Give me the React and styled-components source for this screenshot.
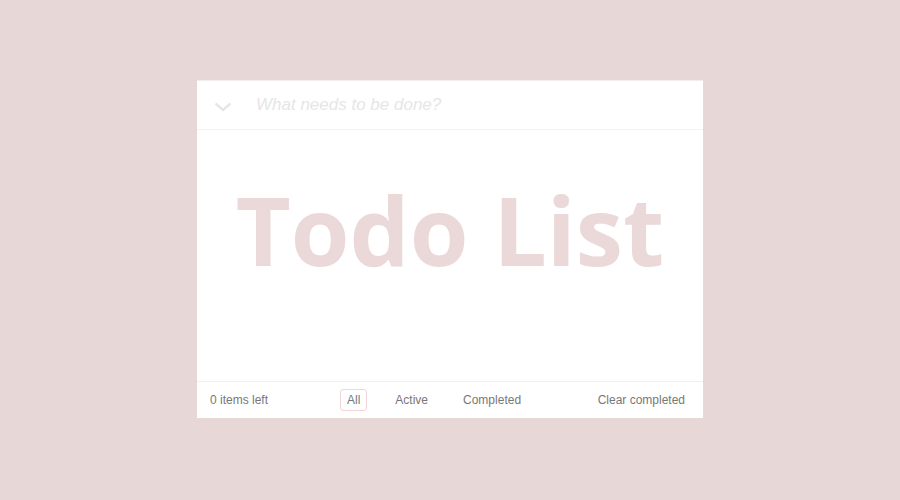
import React from 'react';
import styled, { createGlobalStyle } from 'styled-components';

const GlobalStyle = createGlobalStyle`
  html, body {
    margin: 0;
    padding: 0;
    background: #e8d7d7;
  }
  body {
    font-family: "Liberation Sans", Arial, sans-serif;
  }
`;

const Page = styled.div`
  width: 900px;
  height: 500px;
  display: flex;
  align-items: center;
  justify-content: center;
`;

const Card = styled.section`
  width: 506px;
  height: 338px;
  margin-bottom: 2px;
  background: #fff;
  display: flex;
  flex-direction: column;
  box-sizing: border-box;
  border-top: 1px solid #f3ecec;
`;

const Header = styled.header`
  height: 49px;
  display: flex;
  align-items: center;
  border-bottom: 1px solid #f3f3f3;
  box-sizing: border-box;
`;

const Toggle = styled.span`
  width: 59px;
  display: flex;
  justify-content: center;
  padding-top: 3px;
  svg {
    margin-left: -8px;
  }
`;

const NewTodo = styled.input`
  flex: 1;
  border: none;
  outline: none;
  background: transparent;
  font-family: "Liberation Sans", Arial, sans-serif;
  font-size: 17px;
  font-style: italic;
  padding: 0;
  &::placeholder {
    color: #e6e6e6;
  }
`;

const Body = styled.main`
  flex: 1;
  display: flex;
  justify-content: center;
  padding-top: 52px;
  box-sizing: border-box;
`;

const Watermark = styled.h1`
  margin: 0;
  font-family: "Open Sans", sans-serif;
  font-weight: 700;
  font-size: 95px;
  line-height: 1;
  color: #ebd8d8;
  letter-spacing: 0;
`;

const Footer = styled.footer`
  height: 37px;
  border-top: 1px solid #f0f0f0;
  display: flex;
  align-items: center;
  padding: 0 18px 0 13px;
  font-size: 12px;
  color: #777;
  box-sizing: border-box;
`;

const Count = styled.span`
  width: 130px;
`;

const Filters = styled.ul`
  list-style: none;
  margin: 0;
  padding: 0;
  display: flex;
  gap: 21px;
  flex: 1;
`;

const Filter = styled.li`
  padding: 3px 6px;
  border-radius: 3px;
  border: 1px solid ${({ $selected }) => ($selected ? '#efd5d5' : 'transparent')};
  color: #777;
`;

const Clear = styled.span`
  color: #777;
`;

const filters = ['All', 'Active', 'Completed'];

export default function App() {
  return (
    <>
      <GlobalStyle />
      <Page>
        <Card>
          <Header>
            <Toggle>
              <svg width="18" height="10" viewBox="0 0 18 10" fill="none">
                <path d="M1.5 1.5 L9 8 L16.5 1.5" stroke="#e6e6e6" strokeWidth="2.4" />
              </svg>
            </Toggle>
            <NewTodo placeholder="What needs to be done?" />
          </Header>
          <Body>
            <Watermark>Todo List</Watermark>
          </Body>
          <Footer>
            <Count>0 items left</Count>
            <Filters>
              {filters.map(f => (
                <Filter key={f} $selected={f === 'All'}>
                  {f}
                </Filter>
              ))}
            </Filters>
            <Clear>Clear completed</Clear>
          </Footer>
        </Card>
      </Page>
    </>
  );
}
